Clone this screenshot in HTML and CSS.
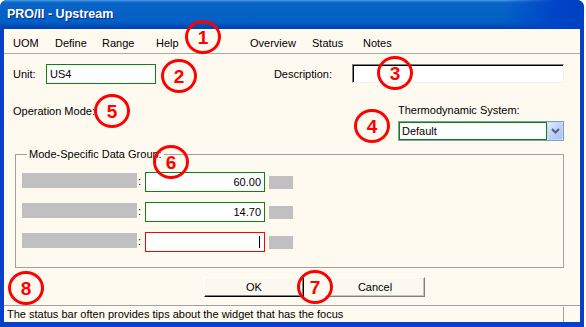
FILE: index.html
```html
<!DOCTYPE html>
<html lang="en">
<head>
  <meta charset="UTF-8">
  <title>PRO/II - Upstream</title>
  <link rel="stylesheet" href="styles.css">
</head>
<body>
  <div class="window">
    <div class="titlebar"><span class="title">PRO/II - Upstream</span></div>

    <div class="client">
      <nav class="menubar">
        <span>UOM</span>
        <span>Define</span>
        <span>Range</span>
        <span>Help</span>
        <span>Overview</span>
        <span>Status</span>
        <span>Notes</span>
      </nav>

      <div class="content">
        <div class="row-top">
          <span class="unit-label">Unit:</span>
          <div class="textbox valid unit-box">US4</div>
          <span class="desc-label">Description:</span>
          <div class="sunken desc-box"></div>
        </div>

        <div class="row-mode">
          <span class="mode-label">Operation Mode:</span>
          <div class="thermo">
            <div class="thermo-label">Thermodynamic System:</div>
            <div class="combo">
              <span class="combo-text">Default</span>
              <span class="combo-btn">
                <svg width="9" height="6" viewBox="0 0 9 6"><path d="M1 1 L4.5 4.5 L8 1" fill="none" stroke="#4d6185" stroke-width="2"/></svg>
              </span>
            </div>
          </div>
        </div>

        <!-- groupe de champs dépendant du mode -->
        <div class="group">
          <div class="group-title">Mode-Specific Data Group:</div>
          <div class="field-row">
            <span class="bar"></span>
            <span class="colon">:</span>
            <div class="textbox valid num">60.00</div>
            <span class="uom"></span>
          </div>
          <div class="field-row">
            <span class="bar"></span>
            <span class="colon">:</span>
            <div class="textbox valid num">14.70</div>
            <span class="uom"></span>
          </div>
          <div class="field-row">
            <span class="bar"></span>
            <span class="colon">:</span>
            <div class="textbox invalid num"><span class="caret"></span></div>
            <span class="uom"></span>
          </div>
        </div>

        <div class="buttons">
          <button class="btn btn-default">OK</button>
          <button class="btn">Cancel</button>
        </div>
      </div>

      <div class="statusbar">
        <span class="status-text">The status bar often provides tips about the widget that has the focus</span>
      </div>
    </div>

    <!-- repères numérotés -->
    <span class="callout c1">1</span>
    <span class="callout c2">2</span>
    <span class="callout c3">3</span>
    <span class="callout c4">4</span>
    <span class="callout c5">5</span>
    <span class="callout c6">6</span>
    <span class="callout c7">7</span>
    <span class="callout c8">8</span>
  </div>
</body>
</html>
```

FILE: styles.css
```css
* {
  box-sizing: border-box;
}
body {
  margin: 0;
  background-color: #fff;
  font-family: 'Liberation Sans', Arial, sans-serif;
  font-size: 11px;
  color: #000;
}
.window {
  position: relative;
  width: 584px;
  height: 327px;
  background-color: #0841c8;
  border-radius: 7px 7px 0 0;
  display: flex;
  flex-direction: column;
}
.titlebar {
  height: 29px;
  border-radius: 7px 7px 0 0;
  background:
    linear-gradient(to right, rgba(0, 64, 200, 0) 86%, #0044c8 95%, #0040c0 100%),
    linear-gradient(to bottom, #5aa8e4 0, #2a80d8 1px, #0a64c8 3px, #0060c4 22px, #0050bc 25px, #0040b0 29px);
  padding: 3px 0 0 7px;
}
.title {
  display: block;
  font-size: 12.5px;
  font-weight: bold;
  line-height: 23px;
  color: #fff;
  text-shadow: 1px 1px 0 #0a2a80;
}
.client {
  flex: 1;
  margin: 0 4px 5px 4px;
  background-color: #fffaf0;
  display: flex;
  flex-direction: column;
}
.menubar {
  display: grid;
  grid-template-columns: 42px 47px 54px 94px 62px 51px auto;
  height: 25px;
  padding: 4px 0 0 9px;
  line-height: 20px;
  border-bottom: 1px solid #a8a8a8;
}
.content {
  padding: 10px 16px 0 9px;
}
.row-top {
  display: flex;
  align-items: center;
  height: 20px;
  line-height: 13px;
}
.unit-label {
  width: 33px;
}
.textbox {
  height: 20px;
  background-color: #fff;
  border: 1px solid #108010;
  line-height: 18px;
}
.textbox.valid {
  border-color: #108010;
}
.textbox.invalid {
  border-color: #ff0000;
}
.unit-box {
  width: 110px;
  padding-left: 3px;
}
.desc-label {
  margin-left: auto;
}
.sunken {
  background-color: #fff;
  border: 1px solid;
  border-color: #808080 #f4f1e6 #f4f1e6 #808080;
  box-shadow: inset 1px 1px 0 #000;
}
.desc-box {
  width: 212px;
  height: 19px;
  margin-left: 20px;
  margin-top: -1px;
}
.row-mode {
  display: flex;
  margin-top: 20px;
  line-height: 13px;
}
.mode-label {
  margin-top: 1px;
}
.thermo {
  margin-left: auto;
  width: 166px;
}
.combo {
  display: flex;
  height: 20px;
  margin-top: 4px;
  border: 1px solid #7f9db9;
  background-color: #fff;
}
.combo-text {
  flex: 1;
  border: 1px solid #108010;
  padding-left: 2px;
  line-height: 16px;
}
.combo-btn {
  width: 16px;
  display: flex;
  align-items: center;
  justify-content: center;
  background: linear-gradient(135deg, #e0eafc, #b8cef5 60%, #a8c2f0);
  border: 1px solid #c8d8f8;
  border-radius: 2px;
}
.group {
  margin: 13px 0 0 2px;
  border: 1px solid #a0a0a0;
  padding: 0 0 15px 6px;
  line-height: 13px;
}
.group-title {
  width: max-content;
  margin: -7px 0 0 5px;
  padding: 0 2px;
  background-color: #fffaf0;
}
.field-row {
  display: flex;
  align-items: flex-start;
  height: 20px;
  margin-top: 10px;
}
.group-title + .field-row {
  margin-top: 11px;
}
.bar {
  width: 115px;
  height: 15px;
  margin-top: 1px;
  background-color: #c0c0c0;
}
.colon {
  width: 8px;
  padding-left: 1px;
  line-height: 18px;
}
.num {
  width: 120px;
  text-align: right;
  padding-right: 3px;
}
.caret {
  display: inline-block;
  width: 1px;
  height: 12px;
  margin-right: 1px;
  vertical-align: -2px;
  background-color: #000;
}
.uom {
  width: 24px;
  height: 13px;
  margin: 4px 0 0 4px;
  background-color: #c0c0c0;
}
.buttons {
  display: flex;
  gap: 21px;
  margin: 9px 0 0 191px;
}
.btn {
  width: 100px;
  height: 20px;
  padding: 0;
  font-family: inherit;
  font-size: 11px;
  color: #000;
  background-color: #fbf8ee;
  border: 1px solid;
  border-color: #fff #808080 #808080 #fff;
  box-shadow: inset -1px -1px 0 #c8c5ba;
}
.btn-default {
  border-color: #fff #000 #000 #fff;
  box-shadow: inset -1px -1px 0 #808080;
}
.statusbar {
  margin-top: auto;
  height: 17px;
  border-top: 1px solid #a0a0a0;
  box-shadow: inset 0 1px 0 #fff;
}
.status-text {
  display: block;
  width: 560px;
  height: 15px;
  margin-top: 1px;
  padding-left: 3px;
  line-height: 15px;
  border-right: 1px solid #a0a0a0;
}
.callout {
  position: absolute;
  width: 36px;
  height: 34px;
  border: 3px solid #ff0000;
  border-radius: 50%;
  display: flex;
  align-items: center;
  justify-content: center;
  color: #ff0000;
  font-size: 19px;
  font-weight: bold;
  line-height: 1;
}
.c1 { left: 185px; top: 20px; }
.c2 { left: 161px; top: 59px; }
.c3 { left: 377px; top: 56px; }
.c4 { left: 354px; top: 109px; }
.c5 { left: 94px; top: 94px; }
.c6 { left: 153px; top: 145px; }
.c7 { left: 297px; top: 270px; }
.c8 { left: 8px; top: 271px; }
```
